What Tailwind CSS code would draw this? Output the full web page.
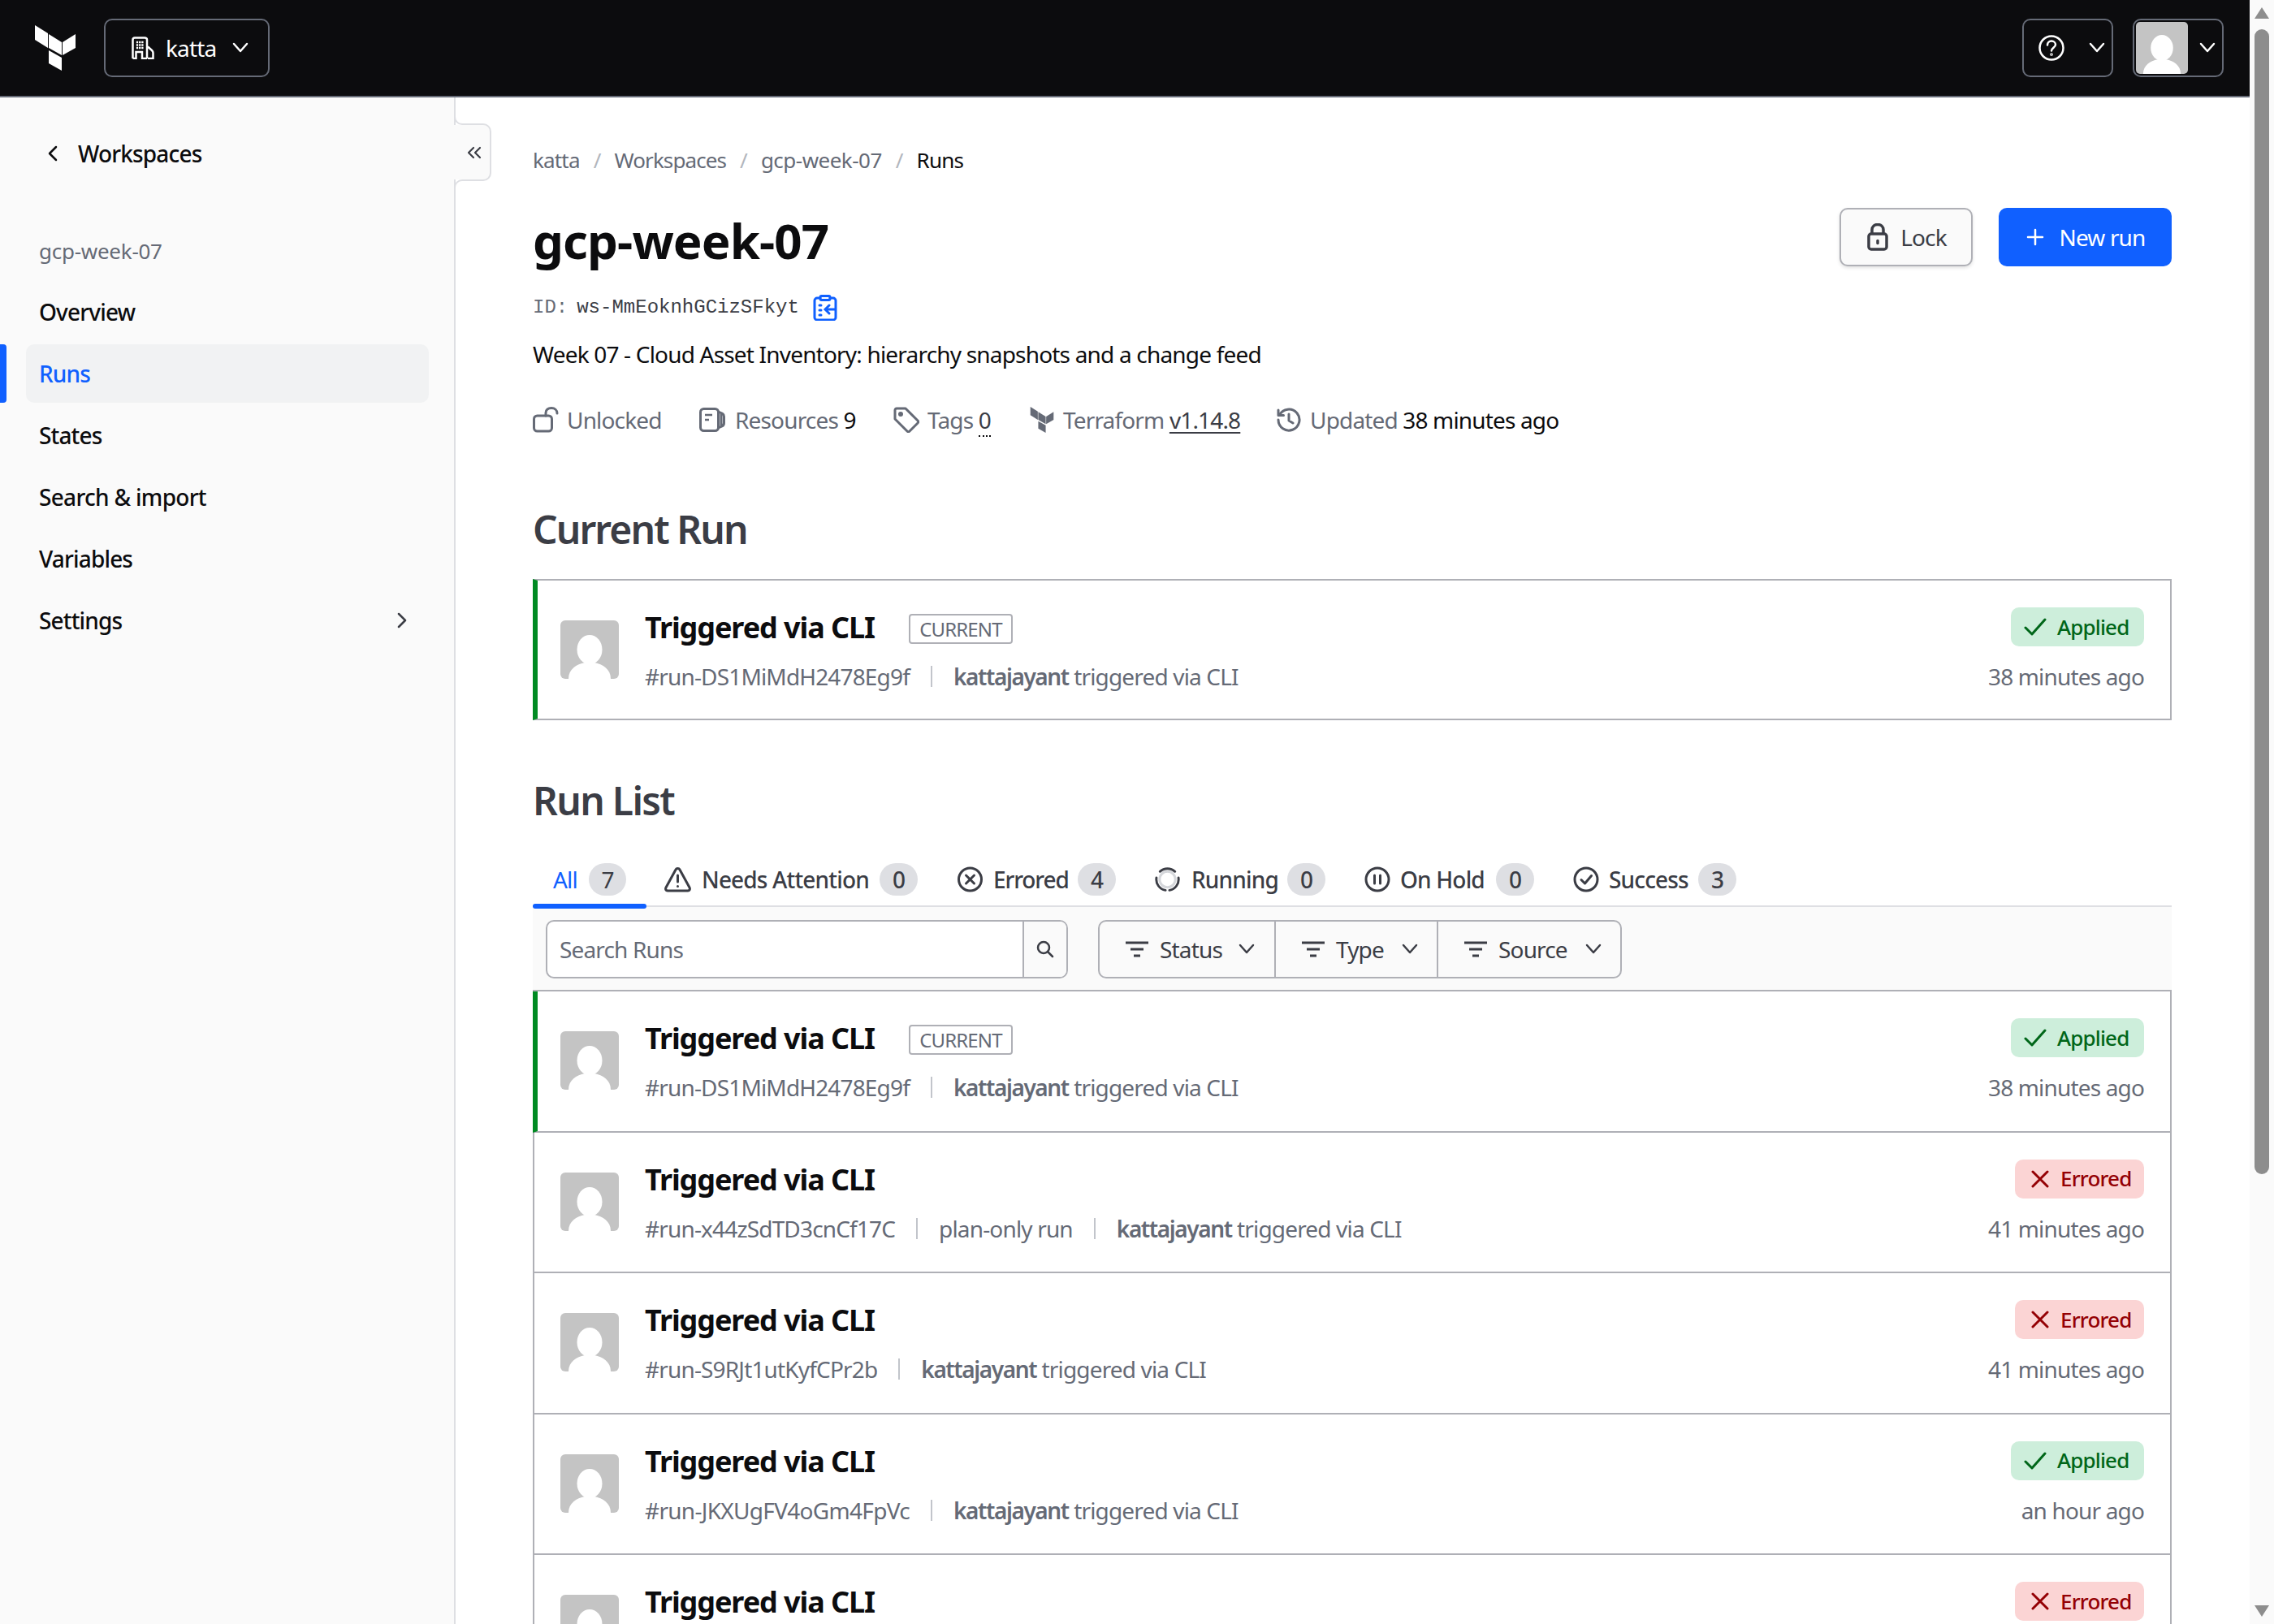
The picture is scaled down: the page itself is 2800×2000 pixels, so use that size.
<!DOCTYPE html>
<html>
<head>
<meta charset="utf-8">
<script src="https://cdn.jsdelivr.net/npm/@tailwindcss/browser@4"></script>
</head>
<body class="bg-white">
<div class="flex h-[2000px] w-[2800px] overflow-hidden font-['Noto_Sans',sans-serif] text-[28px] tracking-[-0.03em] text-[#0c0c0e]">
  <div class="flex h-full w-[2770px] flex-col">
    <header class="flex h-[120px] shrink-0 items-center justify-between border-b-2 border-[#656a76] bg-[#0c0c0e] pr-[32px] pl-[43px]">
      <div class="flex items-center gap-[35px]">
        <svg width="50" height="56" viewBox="43 32 50 56" fill="#fff"><polygon points="43,32 59,42 59,60 43,50"/><polygon points="60,43 76,53 76,69 60,60"/><polygon points="77,53 93,43 93,60 77,69"/><polygon points="60,63 76,72 76,88 60,79"/></svg>
        <div class="flex h-[72px] w-[204px] items-center rounded-[10px] border-2 border-[#656a76] pl-[32px] text-white">
          <svg width="28" height="28" viewBox="0 0 28 28" fill="none" stroke="#fff" stroke-width="2.500"><path d="M1.500 27V4C1.500 2.500 2.500 1.500 4 1.500H16C18 1.500 19 2.500 19 4V27M1.500 27H5.500V19H13V27H19M20 12.500L25 17C26 18 26.500 18.500 26.500 20V27H20"/><path d="M7 7h.01M10.200 7h.01M13.400 7h.01M7 10.500h.01M10.200 10.500h.01M13.400 10.500h.01M7 14h.01M10.200 14h.01M13.400 14h.01" stroke-width="2.300" stroke-linecap="square"/></svg>
          <span class="ml-[14px] w-[82px]">katta</span>
          <svg width="20" height="14" viewBox="0 0 20 14" fill="none" stroke="#fff" stroke-width="2.500" stroke-linecap="round" stroke-linejoin="round"><path d="M2 2l8 9 8-9"/></svg>
        </div>
      </div>
      <div class="flex items-center gap-[24px]">
        <div class="flex h-[72px] w-[112px] items-center rounded-[10px] border-2 border-[#656a76] pl-[18px]">
          <svg width="32" height="32" viewBox="0 0 32 32" fill="none" stroke="#fff" stroke-width="2.500" stroke-linecap="round"><circle cx="16" cy="16" r="14.500"/><path d="M11 12.500c0-3 2.300-5 5-5s5 2 5 4.500c0 3.500-5 4-5 7.500"/><circle cx="16" cy="24" r="0.600"/></svg>
          <svg class="ml-[30px]" width="20" height="14" viewBox="0 0 20 14" fill="none" stroke="#fff" stroke-width="2.500" stroke-linecap="round" stroke-linejoin="round"><path d="M2 2l8 9 8-9"/></svg>
        </div>
        <div class="flex h-[72px] w-[112px] items-center rounded-[10px] border-2 border-[#656a76] pl-[2px]">
          <svg class="rounded-[5px]" width="64" height="64" viewBox="0 0 72 72"><rect width="72" height="72" fill="#c4c4c4"/><ellipse cx="36" cy="36" rx="15.500" ry="18" fill="#fff"/><path d="M10 72C10 60 20 54 30 52H42C52 54 62 60 62 72Z" fill="#fff"/></svg>
          <svg class="ml-[14px]" width="20" height="14" viewBox="0 0 20 14" fill="none" stroke="#fff" stroke-width="2.500" stroke-linecap="round" stroke-linejoin="round"><path d="M2 2l8 9 8-9"/></svg>
        </div>
      </div>
    </header>
    <div class="flex min-h-0 flex-1">
      <aside class="relative h-full w-[561px] shrink-0 border-r-2 border-[#dedfe3] bg-[#fafafa] font-medium tracking-[-0.03em]">
        <div class="mt-[33px] flex h-[72px] items-center pl-[58px]">
          <svg width="14" height="20" viewBox="0 0 14 20" fill="none" stroke="#0c0c0e" stroke-width="2.500" stroke-linecap="round" stroke-linejoin="round"><path d="M11 2L3 10l8 8"/></svg>
          <span class="ml-[24px]">Workspaces</span>
        </div>
        <div class="mt-[65px] pl-[48px] text-[26px] font-normal tracking-[-0.01em] text-[#656a76]">gcp-week-07</div>
        <nav class="mt-[19px] flex flex-col gap-[4px]">
          <div class="flex h-[72px] items-center pl-[48px]">Overview</div>
          <div class="relative ml-[32px] flex h-[72px] w-[496px] items-center rounded-[10px] bg-[#f1f2f3] pl-[16px] text-[#1060ff]"><span class="absolute top-0 -left-[32px] h-[72px] w-[8px] rounded-r-[4px] bg-[#1060ff]"></span>Runs</div>
          <div class="flex h-[72px] items-center pl-[48px]">States</div>
          <div class="flex h-[72px] items-center pl-[48px] tracking-[-0.025em]">Search &amp; import</div>
          <div class="flex h-[72px] items-center pl-[48px]">Variables</div>
          <div class="flex h-[72px] w-[502px] items-center justify-between pl-[48px]"><span>Settings</span><svg width="14" height="20" viewBox="0 0 14 20" fill="none" stroke="#3b3d45" stroke-width="2.500" stroke-linecap="round" stroke-linejoin="round"><path d="M3 2l8 8-8 8"/></svg></div>
        </nav>
        <div class="absolute top-[34px] -right-[10px] h-[67px] w-[10px] bg-[#fafafa]"></div>
        <div class="absolute top-[22px] -right-[10px] h-[12px] w-[10px] rounded-bl-[10px] border-b-2 border-l-2 border-[#dedfe3] bg-white"></div>
        <div class="absolute top-[101px] -right-[10px] h-[12px] w-[10px] rounded-tl-[10px] border-t-2 border-l-2 border-[#dedfe3] bg-white"></div>
        <div class="absolute top-[32px] -right-[46px] flex h-[71px] w-[36px] items-center justify-center rounded-r-[10px] border-y-2 border-r-2 border-[#dedfe3] bg-[#fafafa]">
          <svg class="-ml-[5px]" width="18" height="16" viewBox="0 0 18 16" fill="none" stroke="#3b3d45" stroke-width="2.200" stroke-linecap="round" stroke-linejoin="round"><path d="M8 2L2 8l6 6M16 2l-6 6 6 6"/></svg>
        </div>
      </aside>
      <main class="ml-[95px] w-[2018px] shrink-0">
        <div class="mt-[60px] flex items-center text-[26px] leading-[34px] text-[#656a76]">
          <span>katta</span><span class="mx-[17px] text-[#b2b6bd]">/</span><span class="tracking-[-0.035em]">Workspaces</span><span class="mx-[17px] text-[#b2b6bd]">/</span><span class="tracking-[-0.02em]">gcp-week-07</span><span class="mx-[17px] text-[#b2b6bd]">/</span><span class="text-[#0c0c0e]">Runs</span>
        </div>
        <div class="mt-[42px] flex items-start justify-between">
          <h1 class="h-[82px] text-[60px] leading-[80px] font-bold tracking-[-0.015em]">gcp-week-07</h1>
          <div class="flex gap-[32px]">
            <div class="flex h-[72px] w-[164px] items-center justify-center gap-[15px] rounded-[10px] border-2 border-[#afb0b6] bg-[#fafafa] pl-[2px] text-[#3b3d45] shadow-[0_2px_4px_rgba(0,0,0,0.12)]">
              <svg width="26" height="34" viewBox="0 0 26 34" fill="none" stroke="#3b3d45" stroke-width="3.500"><rect x="2" y="13" width="22" height="19" rx="3"/><path d="M6 13V8c0-4 3-6.500 7-6.500s7 2.500 7 6.500v5"/><path d="M13 21.500v3" stroke-linecap="round"/></svg>
              Lock
            </div>
            <div class="flex h-[72px] w-[213px] items-center justify-center gap-[18px] rounded-[10px] bg-[#1060ff] pl-[2px] text-white">
              <svg width="22" height="22" viewBox="0 0 22 22" stroke="#fff" stroke-width="2.500" stroke-linecap="round"><path d="M11 2v18M2 11h18"/></svg>
              New run
            </div>
          </div>
        </div>
        <div class="mt-[24px] flex h-[34px] items-center font-['Liberation_Mono',monospace] text-[24px] tracking-normal text-[#3b3d45]">
          <span class="text-[#656a76]">ID:</span><span class="ml-[11px]">ws-MmEoknhGCizSFkyt</span>
          <svg class="ml-[17px]" width="30" height="32" viewBox="0 0 30 32" fill="none" stroke="#1060ff" stroke-width="3" stroke-linecap="round"><path d="M9 4H5C3.500 4 2 5.500 2 7v21c0 1.500 1.500 3 3 3h20c1.500 0 3-1.500 3-3V7c0-1.500-1.500-3-3-3h-4"/><rect x="9" y="1.500" width="12" height="5" rx="1.500"/><path d="M8 13h2M8 19h2M8 25h2M27 18H15M20 13l-5 5 5 5"/></svg>
        </div>
        <div class="mt-[22px] h-[36px] leading-[36px] tracking-[-0.029em]">Week 07 - Cloud Asset Inventory: hierarchy snapshots and a change feed</div>
        <div class="mt-[44px] flex h-[38px] items-center text-[#656a76]">
          <svg width="32" height="32" viewBox="0 0 32 32" fill="none" stroke="#656a76" stroke-width="3" stroke-linecap="round"><rect x="1.500" y="11" width="22" height="19" rx="4"/><path d="M16 11V7.500C16 3.500 19 1.500 23 1.500S30 4 30 8"/></svg>
          <span class="ml-[10px] w-[163px] whitespace-nowrap">Unlocked</span>
          <svg width="32" height="30" viewBox="0 0 32 30" fill="none" stroke="#656a76" stroke-width="3" stroke-linejoin="round"><rect x="1.500" y="1.500" width="22" height="27" rx="4"/><path d="M23.500 5L28 7C30 8 30.500 9 30.500 11V19C30.500 21 30 22 28 23L23.500 25M27 6V24"/><path d="M7 9h9M7 15h5" stroke-width="2.500"/></svg>
          <span class="ml-[12px] w-[195px] whitespace-nowrap">Resources <span class="text-[#0c0c0e]">9</span></span>
          <svg width="32" height="32" viewBox="0 0 32 32" fill="none" stroke="#656a76" stroke-width="3" stroke-linejoin="round"><path d="M2 4c0-1 1-2 2-2h11l15 15c1 1 1 2 0 3L20 30c-1 1-2 1-3 0L2 15Z"/><circle cx="9" cy="9" r="1.500" fill="#656a76"/></svg>
          <span class="ml-[10px] w-[126px] whitespace-nowrap">Tags <span class="border-b-2 border-dotted border-[#0c0c0e] leading-none text-[#3b3d45]">0</span></span>
          <svg width="30" height="32" viewBox="43 32 50 56" fill="#656a76"><polygon points="43,32 59,42 59,60 43,50"/><polygon points="60,43 76,53 76,69 60,60"/><polygon points="77,53 93,43 93,60 77,69"/><polygon points="60,63 76,72 76,88 60,79"/></svg>
          <span class="ml-[11px] w-[263px] whitespace-nowrap">Terraform <span class="text-[#3b3d45] underline underline-offset-[4px]">v1.14.8</span></span>
          <svg width="30" height="30" viewBox="0 0 30 30" fill="none" stroke="#656a76" stroke-width="3" stroke-linecap="round" stroke-linejoin="round"><path d="M3.500 9A13 13 0 1 1 2 15M2 3v6.500h6.500M15 8v8l5 3"/></svg>
          <span class="ml-[11px]">Updated <span class="text-[#0c0c0e]">38 minutes ago</span></span>
        </div>
        <h2 class="mt-[83px] h-[66px] text-[48px] leading-[66px] font-semibold tracking-[-0.04em] text-[#3b3d45]">Current Run</h2>
        <div class="mt-[28px] flex h-[174px] w-[2018px] items-start justify-between border-2 border-l-[6px] border-[#afb0b6] border-l-[#008a22] pt-[33px] pr-[32px] pl-[28px]">
          <div class="flex">
            <svg class="mt-[16px] rounded-[6px]" width="72" height="72" viewBox="0 0 72 72"><rect width="72" height="72" fill="#c4c4c4"/><ellipse cx="36" cy="36" rx="15.500" ry="18" fill="#fff"/><path d="M10 72C10 60 20 54 30 52H42C52 54 62 60 62 72Z" fill="#fff"/></svg>
            <div class="mt-[1px] ml-[32px]">
              <div class="flex h-[48px] items-center">
                <span class="text-[36px] font-bold tracking-[-0.03em]">Triggered via CLI</span>
                <span class="mt-[3px] ml-[42px] flex h-[37px] w-[128px] items-center justify-center rounded-[4px] border-2 border-[#afb0b6] text-[24px] text-[#656a76]">CURRENT</span>
              </div>
              <div class="mt-[17px] flex h-[38px] items-center text-[#656a76]"><span>#run-DS1MiMdH2478Eg9f</span><span class="mx-[26px] h-[26px] w-[2px] bg-[#c2c5cb]"></span><span class="tracking-[-0.03em]"><b class="font-semibold tracking-[-0.05em]">kattajayant</b> triggered via CLI</span></div>
            </div>
          </div>
          <div class="flex flex-col items-end">
            <span class="flex h-[48px] w-[164px] items-center gap-[13px] rounded-[10px] bg-[#cdeedb] pl-[16px] text-[26px] font-medium text-[#006619]"><svg width="28" height="24" viewBox="0 0 28 24" fill="none" stroke="#006619" stroke-width="3" stroke-linecap="round" stroke-linejoin="round"><path d="M2 13l8 8L26 3"/></svg>Applied</span>
            <span class="mt-[18px] h-[38px] leading-[38px] text-[#656a76]">38 minutes ago</span>
          </div>
        </div>
        <h2 class="mt-[66px] h-[66px] text-[48px] leading-[66px] font-semibold tracking-[-0.035em] text-[#3b3d45]">Run List</h2>
        <div class="relative mt-[44px] flex h-[54px] w-[2018px] items-start border-b-2 border-[#dedfe3]">
          <div class="absolute -bottom-[4px] left-0 h-[6px] w-[140px] rounded-[3px] bg-[#1060ff]"></div>
          <div class="ml-[25px] flex h-[40px] items-center text-[#1060ff]"><span class="w-[44px]">All</span><span class="flex h-[40px] w-[46px] items-center justify-center rounded-full bg-[#dedfe3] text-[#3b3d45]">7</span></div>
          <div class="ml-[47px] flex h-[40px] items-center font-medium text-[#3b3d45]"><svg width="33" height="32" viewBox="0 0 33 32" fill="none" stroke="#3b3d45" stroke-width="3" stroke-linecap="round" stroke-linejoin="round"><path d="M14 4c1-2 4-2 5 0l12 22c1 2 0 4-2 4H4c-2 0-3-2-2-4Z"/><path d="M16.500 11v8M16.500 24.500v.01"/></svg><span class="ml-[13px] w-[207px] whitespace-nowrap">Needs Attention</span><span class="ml-[12px] flex h-[40px] w-[47px] items-center justify-center rounded-full bg-[#dedfe3]">0</span></div>
          <div class="ml-[48px] flex h-[40px] items-center font-medium text-[#3b3d45]"><svg width="33" height="32" viewBox="0 0 32 32" fill="none" stroke="#3b3d45" stroke-width="3" stroke-linecap="round"><circle cx="16" cy="16" r="14"/><path d="M11 11l10 10M21 11L11 21"/></svg><span class="ml-[12px] w-[91px] tracking-[-0.04em]">Errored</span><span class="ml-[13px] flex h-[40px] w-[47px] items-center justify-center rounded-full bg-[#dedfe3]">4</span></div>
          <div class="ml-[48px] flex h-[40px] items-center font-medium text-[#3b3d45]"><svg width="31" height="32" viewBox="0 0 32 32" fill="none" stroke-width="3"><circle cx="16" cy="16" r="10" stroke="#d5d7db" stroke-width="3"/><path d="M6.500 6A14 14 0 0 1 25.500 6M2 14A14 14 0 0 0 13.500 29.800M30 14A14 14 0 0 1 18.500 29.800" stroke="#3b3d45" stroke-linecap="round"/></svg><span class="ml-[14px] w-[105px]">Running</span><span class="ml-[13px] flex h-[40px] w-[47px] items-center justify-center rounded-full bg-[#dedfe3]">0</span></div>
          <div class="ml-[48px] flex h-[40px] items-center font-medium text-[#3b3d45]"><svg width="32" height="32" viewBox="0 0 32 32" fill="none" stroke="#3b3d45" stroke-width="3" stroke-linecap="round"><circle cx="16" cy="16" r="14"/><path d="M12.500 11v10M19.500 11v10"/></svg><span class="ml-[12px] w-[106px] whitespace-nowrap">On Hold</span><span class="ml-[12px] flex h-[40px] w-[47px] items-center justify-center rounded-full bg-[#dedfe3]">0</span></div>
          <div class="ml-[48px] flex h-[40px] items-center font-medium text-[#3b3d45]"><svg width="32" height="32" viewBox="0 0 32 32" fill="none" stroke="#3b3d45" stroke-width="3" stroke-linecap="round" stroke-linejoin="round"><circle cx="16" cy="16" r="14"/><path d="M10 16.500l4.500 4.500L22.500 11.500"/></svg><span class="ml-[12px] w-[98px]">Success</span><span class="ml-[12px] flex h-[40px] w-[47px] items-center justify-center rounded-full bg-[#dedfe3]">3</span></div>
        </div>
        <div class="flex h-[102px] w-[2018px] items-start bg-[#fafafa] pt-[16px] pl-[16px]">
          <div class="flex h-[72px] w-[643px] items-center rounded-[10px] border-2 border-[#afb0b6] bg-white text-[#656a76]">
            <span class="flex-1 pl-[15px]">Search Runs</span>
            <span class="flex h-full w-[54px] items-center justify-center rounded-r-[8px] border-l-2 border-[#afb0b6] bg-[#fafafa]"><svg width="24" height="24" viewBox="0 0 24 24" fill="none" stroke="#3b3d45" stroke-width="2.500" stroke-linecap="round"><circle cx="10" cy="10" r="7"/><path d="M15.500 15.500L21 21"/></svg></span>
          </div>
          <div class="ml-[37px] flex h-[72px] w-[645px] items-center rounded-[10px] border-2 border-[#afb0b6] text-[#3b3d45]">
            <div class="flex h-full w-[217px] items-center border-r-2 border-[#afb0b6] pl-[32px]"><svg width="28" height="20" viewBox="0 0 28 20" stroke="#3b3d45" stroke-width="3"><path d="M0 2h28M6 10h16M10 18h8"/></svg><span class="ml-[14px] w-[97px]">Status</span><svg width="20" height="14" viewBox="0 0 20 14" fill="none" stroke="#3b3d45" stroke-width="2.500" stroke-linecap="round" stroke-linejoin="round"><path d="M2 2l8 9 8-9"/></svg></div>
            <div class="flex h-full w-[200px] items-center border-r-2 border-[#afb0b6] pl-[32px]"><svg width="28" height="20" viewBox="0 0 28 20" stroke="#3b3d45" stroke-width="3"><path d="M0 2h28M6 10h16M10 18h8"/></svg><span class="ml-[14px] w-[81px]">Type</span><svg width="20" height="14" viewBox="0 0 20 14" fill="none" stroke="#3b3d45" stroke-width="2.500" stroke-linecap="round" stroke-linejoin="round"><path d="M2 2l8 9 8-9"/></svg></div>
            <div class="flex h-full flex-1 items-center pl-[32px]"><svg width="28" height="20" viewBox="0 0 28 20" stroke="#3b3d45" stroke-width="3"><path d="M0 2h28M6 10h16M10 18h8"/></svg><span class="ml-[14px] w-[107px]">Source</span><svg width="20" height="14" viewBox="0 0 20 14" fill="none" stroke="#3b3d45" stroke-width="2.500" stroke-linecap="round" stroke-linejoin="round"><path d="M2 2l8 9 8-9"/></svg></div>
          </div>
        </div>
        <div class="w-[2018px] border-t-2 border-[#afb0b6]">
          <div class="flex h-[173.600px] items-start justify-between border-r-2 border-b-2 border-l-[6px] border-[#afb0b6] border-l-[#008a22] pt-[33px] pr-[32px] pl-[28px]">
            <div class="flex">
              <svg class="mt-[16px] rounded-[6px]" width="72" height="72" viewBox="0 0 72 72"><rect width="72" height="72" fill="#c4c4c4"/><ellipse cx="36" cy="36" rx="15.500" ry="18" fill="#fff"/><path d="M10 72C10 60 20 54 30 52H42C52 54 62 60 62 72Z" fill="#fff"/></svg>
              <div class="mt-[1px] ml-[32px]">
                <div class="flex h-[48px] items-center"><span class="text-[36px] font-bold tracking-[-0.03em]">Triggered via CLI</span><span class="mt-[3px] ml-[42px] flex h-[37px] w-[128px] items-center justify-center rounded-[4px] border-2 border-[#afb0b6] text-[24px] text-[#656a76]">CURRENT</span></div>
                <div class="mt-[17px] flex h-[38px] items-center text-[#656a76]"><span>#run-DS1MiMdH2478Eg9f</span><span class="mx-[26px] h-[26px] w-[2px] bg-[#c2c5cb]"></span><span class="tracking-[-0.03em]"><b class="font-semibold tracking-[-0.05em]">kattajayant</b> triggered via CLI</span></div>
              </div>
            </div>
            <div class="flex flex-col items-end">
              <span class="flex h-[48px] w-[164px] items-center gap-[13px] rounded-[10px] bg-[#cdeedb] pl-[16px] text-[26px] font-medium text-[#006619]"><svg width="28" height="24" viewBox="0 0 28 24" fill="none" stroke="#006619" stroke-width="3" stroke-linecap="round" stroke-linejoin="round"><path d="M2 13l8 8L26 3"/></svg>Applied</span>
              <span class="mt-[18px] h-[38px] leading-[38px] text-[#656a76]">38 minutes ago</span>
            </div>
          </div>
          <div class="flex h-[173.600px] items-start justify-between border-x-2 border-b-2 border-[#afb0b6] pt-[33px] pr-[32px] pl-[32px]">
            <div class="flex">
              <svg class="mt-[16px] rounded-[6px]" width="72" height="72" viewBox="0 0 72 72"><rect width="72" height="72" fill="#c4c4c4"/><ellipse cx="36" cy="36" rx="15.500" ry="18" fill="#fff"/><path d="M10 72C10 60 20 54 30 52H42C52 54 62 60 62 72Z" fill="#fff"/></svg>
              <div class="mt-[1px] ml-[32px]">
                <div class="flex h-[48px] items-center"><span class="text-[36px] font-bold tracking-[-0.03em]">Triggered via CLI</span></div>
                <div class="mt-[17px] flex h-[38px] items-center text-[#656a76]"><span>#run-x44zSdTD3cnCf17C</span><span class="mx-[26px] h-[26px] w-[2px] bg-[#c2c5cb]"></span><span>plan-only run</span><span class="mx-[26px] h-[26px] w-[2px] bg-[#c2c5cb]"></span><span class="tracking-[-0.03em]"><b class="font-semibold tracking-[-0.05em]">kattajayant</b> triggered via CLI</span></div>
              </div>
            </div>
            <div class="flex flex-col items-end">
              <span class="flex h-[48px] w-[159px] items-center gap-[14px] rounded-[10px] bg-[#fbd4d4] pl-[20px] text-[26px] font-medium text-[#940004]"><svg width="22" height="22" viewBox="0 0 22 22" stroke="#940004" stroke-width="3" stroke-linecap="round"><path d="M2 2l18 18M20 2L2 20"/></svg>Errored</span>
              <span class="mt-[18px] h-[38px] leading-[38px] text-[#656a76]">41 minutes ago</span>
            </div>
          </div>
          <div class="flex h-[173.600px] items-start justify-between border-x-2 border-b-2 border-[#afb0b6] pt-[33px] pr-[32px] pl-[32px]">
            <div class="flex">
              <svg class="mt-[16px] rounded-[6px]" width="72" height="72" viewBox="0 0 72 72"><rect width="72" height="72" fill="#c4c4c4"/><ellipse cx="36" cy="36" rx="15.500" ry="18" fill="#fff"/><path d="M10 72C10 60 20 54 30 52H42C52 54 62 60 62 72Z" fill="#fff"/></svg>
              <div class="mt-[1px] ml-[32px]">
                <div class="flex h-[48px] items-center"><span class="text-[36px] font-bold tracking-[-0.03em]">Triggered via CLI</span></div>
                <div class="mt-[17px] flex h-[38px] items-center text-[#656a76]"><span>#run-S9RJt1utKyfCPr2b</span><span class="mx-[26px] h-[26px] w-[2px] bg-[#c2c5cb]"></span><span class="tracking-[-0.03em]"><b class="font-semibold tracking-[-0.05em]">kattajayant</b> triggered via CLI</span></div>
              </div>
            </div>
            <div class="flex flex-col items-end">
              <span class="flex h-[48px] w-[159px] items-center gap-[14px] rounded-[10px] bg-[#fbd4d4] pl-[20px] text-[26px] font-medium text-[#940004]"><svg width="22" height="22" viewBox="0 0 22 22" stroke="#940004" stroke-width="3" stroke-linecap="round"><path d="M2 2l18 18M20 2L2 20"/></svg>Errored</span>
              <span class="mt-[18px] h-[38px] leading-[38px] text-[#656a76]">41 minutes ago</span>
            </div>
          </div>
          <div class="flex h-[173.600px] items-start justify-between border-x-2 border-b-2 border-[#afb0b6] pt-[33px] pr-[32px] pl-[32px]">
            <div class="flex">
              <svg class="mt-[16px] rounded-[6px]" width="72" height="72" viewBox="0 0 72 72"><rect width="72" height="72" fill="#c4c4c4"/><ellipse cx="36" cy="36" rx="15.500" ry="18" fill="#fff"/><path d="M10 72C10 60 20 54 30 52H42C52 54 62 60 62 72Z" fill="#fff"/></svg>
              <div class="mt-[1px] ml-[32px]">
                <div class="flex h-[48px] items-center"><span class="text-[36px] font-bold tracking-[-0.03em]">Triggered via CLI</span></div>
                <div class="mt-[17px] flex h-[38px] items-center text-[#656a76]"><span class="tracking-[-0.025em]">#run-JKXUgFV4oGm4FpVc</span><span class="mx-[26px] h-[26px] w-[2px] bg-[#c2c5cb]"></span><span class="tracking-[-0.03em]"><b class="font-semibold tracking-[-0.05em]">kattajayant</b> triggered via CLI</span></div>
              </div>
            </div>
            <div class="flex flex-col items-end">
              <span class="flex h-[48px] w-[164px] items-center gap-[13px] rounded-[10px] bg-[#cdeedb] pl-[16px] text-[26px] font-medium text-[#006619]"><svg width="28" height="24" viewBox="0 0 28 24" fill="none" stroke="#006619" stroke-width="3" stroke-linecap="round" stroke-linejoin="round"><path d="M2 13l8 8L26 3"/></svg>Applied</span>
              <span class="mt-[18px] h-[38px] leading-[38px] text-[#656a76]">an hour ago</span>
            </div>
          </div>
          <div class="flex h-[173.600px] items-start justify-between border-x-2 border-[#afb0b6] pt-[33px] pr-[32px] pl-[32px]">
            <div class="flex">
              <svg class="mt-[16px] rounded-[6px]" width="72" height="72" viewBox="0 0 72 72"><rect width="72" height="72" fill="#c4c4c4"/><ellipse cx="36" cy="36" rx="15.500" ry="18" fill="#fff"/><path d="M10 72C10 60 20 54 30 52H42C52 54 62 60 62 72Z" fill="#fff"/></svg>
              <div class="mt-[1px] ml-[32px]">
                <div class="flex h-[48px] items-center"><span class="text-[36px] font-bold tracking-[-0.03em]">Triggered via CLI</span></div>
              </div>
            </div>
            <div class="flex flex-col items-end">
              <span class="flex h-[48px] w-[159px] items-center gap-[14px] rounded-[10px] bg-[#fbd4d4] pl-[20px] text-[26px] font-medium text-[#940004]"><svg width="22" height="22" viewBox="0 0 22 22" stroke="#940004" stroke-width="3" stroke-linecap="round"><path d="M2 2l18 18M20 2L2 20"/></svg>Errored</span>
            </div>
          </div>
        </div>
      </main>
    </div>
  </div>
  <div class="flex h-full w-[30px] shrink-0 flex-col items-center bg-[#fafafa] px-[6px]">
    <svg class="mt-[9px]" width="18" height="14" viewBox="0 0 18 14" fill="#8d8d8d"><path d="M9 0L18 14H0Z"/></svg>
    <div class="mt-[13px] h-[1410px] w-[18px] rounded-[9px] bg-[#8d8d8d]"></div>
    <div class="flex-1"></div>
    <svg class="mb-[9px]" width="18" height="14" viewBox="0 0 18 14" fill="#8d8d8d"><path d="M0 0H18L9 14Z"/></svg>
  </div>
</div>
</body>
</html>
